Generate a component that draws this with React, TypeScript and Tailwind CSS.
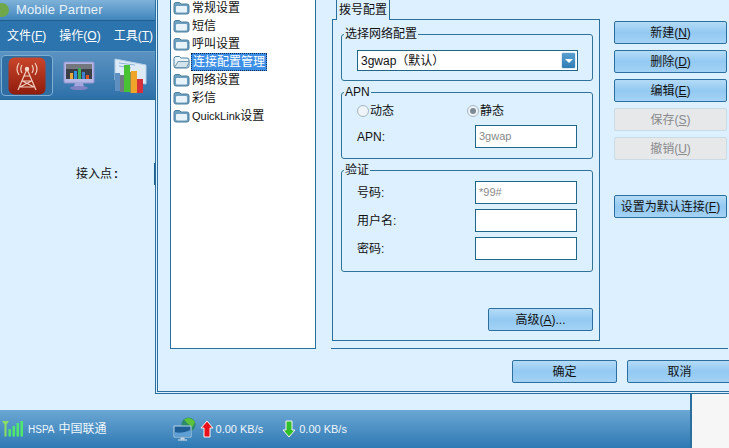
const Folder = ({ open }: { open?: boolean }) => (
  <svg width="17" height="14" viewBox="0 0 17 14" className="shrink-0">
    <path d="M1 3.500 Q1 1.500 3 1.500 L6.500 1.500 L8 3 L14 3 Q16 3 16 5 L16 11 Q16 13 14 13 L3 13 Q1 13 1 11 Z" fill={open ? "#eaf3f8" : "#6ea0bf"} stroke="#4d7f9f" />
    {open ? (
      <path d="M1.500 12.500 L5 6.500 L16.500 6.500 L13.500 12.500 Z" fill="#d3e3ec" stroke="#6f97ae" />
    ) : (
      <rect x="3" y="5" width="11" height="6.500" rx="1" fill="#e9f3fa" />
    )}
  </svg>
);

const TreeItem = ({ label, latin, selected }: { label: string; latin?: string; selected?: boolean }) => (
  <div className="flex h-[18px] items-center">
    <Folder open={selected} />
    <span
      className={
        selected
          ? "ml-[1px] border border-dotted border-[#10305a] bg-[#3d8fe6] px-[1px] leading-[16px] text-white"
          : "ml-[2px] text-[#111]"
      }
    >
      {latin && <span className="text-[11px]">{latin}</span>}
      {label}
    </span>
  </div>
);

const Btn = ({ label, mnemonic, tail, disabled, className }: { label: string; mnemonic?: string; tail?: string; disabled?: boolean; className?: string }) => (
  <div
    className={
      "flex h-[23px] items-center justify-center rounded-[2px] border text-[12px] " +
      (disabled
        ? "border-[#c9dbe6] bg-[#e6e8ea] text-[#8a8a8a] "
        : "border-[#2b6f9e] bg-gradient-to-b from-[#b4dbf7] via-[#93c9f2] to-[#a3d2f5] text-[#111] ") +
      (className ?? "")
    }
  >
    {label}
    {mnemonic && (
      <span>
        (<span className="underline">{mnemonic}</span>)
      </span>
    )}
    {tail}
  </div>
);

const Group = ({ title, className, children }: { title: string; className: string; children: React.ReactNode }) => (
  <div className={"relative rounded-[3px] border border-[#2f7399] " + className}>
    <span className="absolute left-[2px] top-[-9px] bg-[#dcf0ff] px-[1px] text-[12px] leading-[16px] text-[#111]">{title}</span>
    {children}
  </div>
);

const Field = ({ label, value, muted }: { label: string; value?: string; muted?: boolean }) => (
  <div className="flex h-[23px] items-center justify-between">
    <span className="text-[#111]">{label}</span>
    <div className={"flex h-[23px] w-[102px] items-center border border-[#1f6689] bg-white pl-[3px] text-[11px] " + (muted ? "bg-[#fbfdff] text-[#8a8a8a]" : "")}>{value}</div>
  </div>
);

const Radio = ({ checked, label, className }: { checked?: boolean; label: string; className?: string }) => (
  <div className={"flex items-center " + (className ?? "")}>
    <span className="flex h-[12px] w-[12px] items-center justify-center rounded-full border border-[#a7b6c0] bg-[#eef4f8]">
      {checked && <span className="h-[6px] w-[6px] rounded-full bg-[#7d8b94]" />}
    </span>
    <span className="ml-[1px] text-[#111]">{label}</span>
  </div>
);

const TowerIcon = () => (
  <svg width="38" height="38" viewBox="0 0 38 38">
    <defs>
      <linearGradient id="red" x1="0" y1="0" x2="0" y2="1">
        <stop offset="0" stopColor="#c8452a" />
        <stop offset="1" stopColor="#8f1c0c" />
      </linearGradient>
    </defs>
    <rect x="0.500" y="0.500" width="37" height="37" rx="6" fill="url(#red)" />
    <g fill="none" stroke="#f2cfc0" strokeWidth="1.200">
      <path d="M11 6 Q7 12 11 18 M14 8 Q11.500 12 14 16 M27 6 Q31 12 27 18 M24 8 Q26.500 12 24 16" />
      <path d="M19 12 L10 33 M19 12 L28 33 M14.500 24 H23.500 M12 30 H26 M16 19 H22 M14.500 24 L26 30 M23.500 24 L12 30" />
    </g>
    <circle cx="19" cy="12" r="2.200" fill="#f5dacd" />
  </svg>
);

const MonitorIcon = () => (
  <svg width="32" height="30" viewBox="0 0 32 30">
    <rect x="1" y="1" width="30" height="21" rx="1" fill="#b5b8e6" stroke="#8f93cc" />
    <rect x="3" y="3" width="26" height="15" fill="#3a3f46" />
    <rect x="3" y="3" width="26" height="5" fill="#74787e" />
    <rect x="7" y="12" width="3" height="6" fill="#e8a83a" />
    <rect x="11" y="10" width="3" height="8" fill="#2f8fe0" />
    <rect x="15" y="7" width="3" height="11" fill="#3fae5a" />
    <rect x="19" y="11" width="3" height="7" fill="#3f7fd0" />
    <rect x="23" y="14" width="3" height="4" fill="#d8532a" />
    <path d="M12 22 H20 L21 26 H11 Z" fill="#a3a6dc" />
    <ellipse cx="16" cy="27" rx="9" ry="2" fill="#7f83c4" />
  </svg>
);

const ChartIcon = () => (
  <svg width="34" height="36" viewBox="0 0 34 36">
    <path d="M2 1 L33 7 V26 L2 22 Z" fill="#dcebf7" stroke="#b8d0e6" />
    <path d="M6 5 L22 7 M6 8 L18 10" stroke="#8fb4d8" />
    <rect x="2" y="15" width="5" height="18" fill="#5f8fc0" />
    <rect x="7" y="17" width="5" height="17" fill="#6f7a86" />
    <rect x="11" y="7" width="6" height="27" fill="#46c233" />
    <rect x="17" y="14" width="6" height="21" fill="#8f8f50" />
    <rect x="18" y="13" width="6" height="22" fill="#f0a52a" />
    <rect x="24" y="21" width="6" height="14" fill="#d8303a" />
  </svg>
);

const SignalIcon = () => (
  <svg width="21" height="16" viewBox="0 0 21 16" fill="#4fe86a">
    <path d="M0 0 H7 L4.500 3.500 V15.500 H2.500 V3.500 Z" fill="#8be060" />
    <rect x="6.500" y="8" width="2.500" height="7.500" />
    <rect x="10.500" y="5" width="2.500" height="10.500" />
    <rect x="14.500" y="2" width="2.500" height="13.500" />
    <rect x="18.500" y="0" width="2.500" height="15.500" />
  </svg>
);

const NetIcon = () => (
  <svg width="23" height="24" viewBox="0 0 23 24">
    <circle cx="15.500" cy="7.500" r="7" fill="#2a8a6a" />
    <path d="M11 2.500 Q17 -1.500 22 5 L19.500 10 L14 6 Z" fill="#5cc23c" />
    <rect x="0.500" y="8.500" width="18" height="12" rx="1" fill="#bcd6ea" />
    <rect x="1.500" y="9.500" width="16" height="10" fill="#1d5f95" />
    <path d="M1.500 15 Q9 17 17.500 13 V19.500 H1.500 Z" fill="#5f9fd6" />
    <rect x="7.500" y="20.500" width="4" height="2" fill="#c5d4df" />
    <rect x="5" y="22.500" width="9" height="1" fill="#dfe8ef" />
  </svg>
);

const Arrow = ({ down }: { down?: boolean }) => (
  <svg width="14" height="18" viewBox="0 0 14 18" className={down ? "rotate-180" : ""}>
    <path d="M7 1 L13 8 H10 V17 H4 V8 H1 Z" fill={down ? "#32c02a" : "#e8101a"} stroke="#f4f4f4" strokeWidth="1" />
  </svg>
);

export default function App() {
  return (
    <div className="flex h-[448px] w-[729px] flex-col overflow-hidden bg-[#dcf0ff] font-['Liberation_Sans','Noto_Sans_CJK_SC',sans-serif] text-[12px]">
      <div className="flex h-[394px]">
        {/* main window, cut off by the dialog */}
        <div className="flex w-[155px] shrink-0 flex-col">
          <div className="flex h-[21px] items-center border-b-[1px] border-[#1f5f8f] bg-gradient-to-b from-[#7fb2d9] to-[#3f86bd]">
            <span className="ml-[-5px] h-[14px] w-[14px] rounded-full bg-[#6fa84a]" />
            <span className="ml-[7px] text-[13px] tracking-[0.15px] text-[#e8f2fa]">Mobile Partner</span>
          </div>
          <div className="flex h-[31px] items-center border-b border-[#6a9fc6] bg-[#2b74ad] text-white">
            <span className="ml-[7px]">文件(<span className="underline">F</span>)</span>
            <span className="ml-[13px]">操作(<span className="underline">O</span>)</span>
            <span className="ml-[13px] whitespace-nowrap">工具(<span className="underline">T</span>)</span>
          </div>
          <div className="flex h-[48px] items-center border-b border-[#2a6a9a] bg-gradient-to-b from-[#5b93c2] to-[#2c70a8]">
            <div className="ml-[1px] flex h-[41px] w-[52px] items-center justify-center rounded-[4px] border border-[#7fb0d4] bg-[#2f6da3]">
              <TowerIcon />
            </div>
            <div className="ml-[10px]"><MonitorIcon /></div>
            <div className="ml-[18px]"><ChartIcon /></div>
          </div>
          <div className="flex flex-1 items-start justify-end">
            <span className="mr-[36px] mt-[65px] text-[#111]">接入点<b className="ml-[2px]">:</b></span>
            <span className="mt-[63px] h-[22px] w-[1px] bg-[#1f5f8f]" />
          </div>
        </div>

        {/* dialog */}
        <div className="flex flex-1 flex-col border-b-[3px] border-l-[3px] border-double border-[#2b6f9e]">
          <div className="flex h-[349px]">
            <div className="ml-[12px] h-[349px] w-[146px] border border-t-0 border-[#2b6f9e] bg-white pl-[2px]">
              <div className="mt-[-1px]">
                <TreeItem label="常规设置" />
                <TreeItem label="短信" />
                <TreeItem label="呼叫设置" />
                <TreeItem label="连接配置管理" selected />
                <TreeItem label="网络设置" />
                <TreeItem label="彩信" />
                <TreeItem latin="QuickLink" label="设置" />
              </div>
            </div>

            <div className="ml-[15px] flex w-[397px] flex-col border-b border-[#2b6f9e]">
              <div className="ml-[1px] flex w-[268px] flex-col">
                <div className="relative z-10 ml-[4px] flex h-[20px] w-[54px] items-center justify-center border border-b-0 border-t-0 border-[#2b6f9e] bg-[#dcf0ff] text-[#111]">拨号配置</div>
                <div className="mt-[-1px] flex h-[322px] flex-col border border-[#2b6f9e] px-[8px] pt-[14px]">
                  <Group title="选择网络配置" className="h-[47px] w-[252px]">
                    <div className="ml-[15px] mt-[15px] flex h-[21px] w-[221px] items-center justify-between border border-[#1f6689] bg-white pl-[3px] text-[#111]">
                      3gwap（默认）
                      <span className="mr-[1px] flex h-[17px] w-[15px] items-center justify-center rounded-[2px] border border-[#dbeaf5] bg-gradient-to-b from-[#5aa0d0] to-[#2f7db5]">
                        <span className="h-0 w-0 border-x-[4px] border-t-[4px] border-x-transparent border-t-white" />
                      </span>
                    </div>
                  </Group>
                  <Group title="APN" className="mt-[11px] h-[67px] w-[252px] px-[15px]">
                    <div className="mt-[9px] flex h-[17px]">
                      <Radio label="动态" />
                      <Radio label="静态" checked className="ml-[73px]" />
                    </div>
                    <div className="mt-[6px]"><Field label="APN:" value="3gwap" muted /></div>
                  </Group>
                  <Group title="验证" className="mt-[11px] h-[102px] w-[252px] px-[15px] pt-[10px]">
                    <div className="flex flex-col gap-[5px]">
                      <Field label="号码:" value="*99#" muted />
                      <Field label="用户名:" />
                      <Field label="密码:" />
                    </div>
                  </Group>
                  <Btn label="高级" mnemonic="A" tail="..." className="ml-[147px] mt-[36px] w-[105px]" />
                </div>
              </div>
            </div>

            <div className="ml-[-114px] flex w-[113px] flex-col pt-[21px]">
              <Btn label="新建" mnemonic="N" />
              <Btn label="删除" mnemonic="D" className="mt-[6px]" />
              <Btn label="编辑" mnemonic="E" className="mt-[6px]" />
              <Btn label="保存" mnemonic="S" disabled className="mt-[6px]" />
              <Btn label="撤销" mnemonic="U" disabled className="mt-[6px]" />
              <Btn label="设置为默认连接" mnemonic="F" className="mt-[35px]" />
            </div>
          </div>
          <div className="flex justify-end pt-[11px]">
            <Btn label="确定" className="w-[105px]" />
            <Btn label="取消" className="ml-[10px] mr-[-3px] w-[105px]" />
          </div>
        </div>
      </div>

      <div className="flex flex-1">
        <div className="flex w-[690px] flex-col">
          <div className="h-[16px]" />
          <div className="flex flex-1 items-center bg-gradient-to-b from-[#6aa7d3] to-[#2d79b4] text-[#eef6fc]">
            <span className="ml-[2px]"><SignalIcon /></span>
            <span className="ml-[5px] text-[10px]">HSPA</span>
            <span className="ml-[4px]">中国联通</span>
            <span className="ml-[66px]"><NetIcon /></span>
            <span className="ml-[4px]"><Arrow /></span>
            <span className="ml-[2px] text-[11px]">0.00 KB/s</span>
            <span className="ml-[19px]"><Arrow down /></span>
            <span className="ml-[3px] text-[11px]">0.00 KB/s</span>
          </div>
        </div>
        <div className="w-[2px] bg-[#2b6f9e]" />
        <div className="flex-1 bg-[#f6f6f6]" />
      </div>
    </div>
  );
}
